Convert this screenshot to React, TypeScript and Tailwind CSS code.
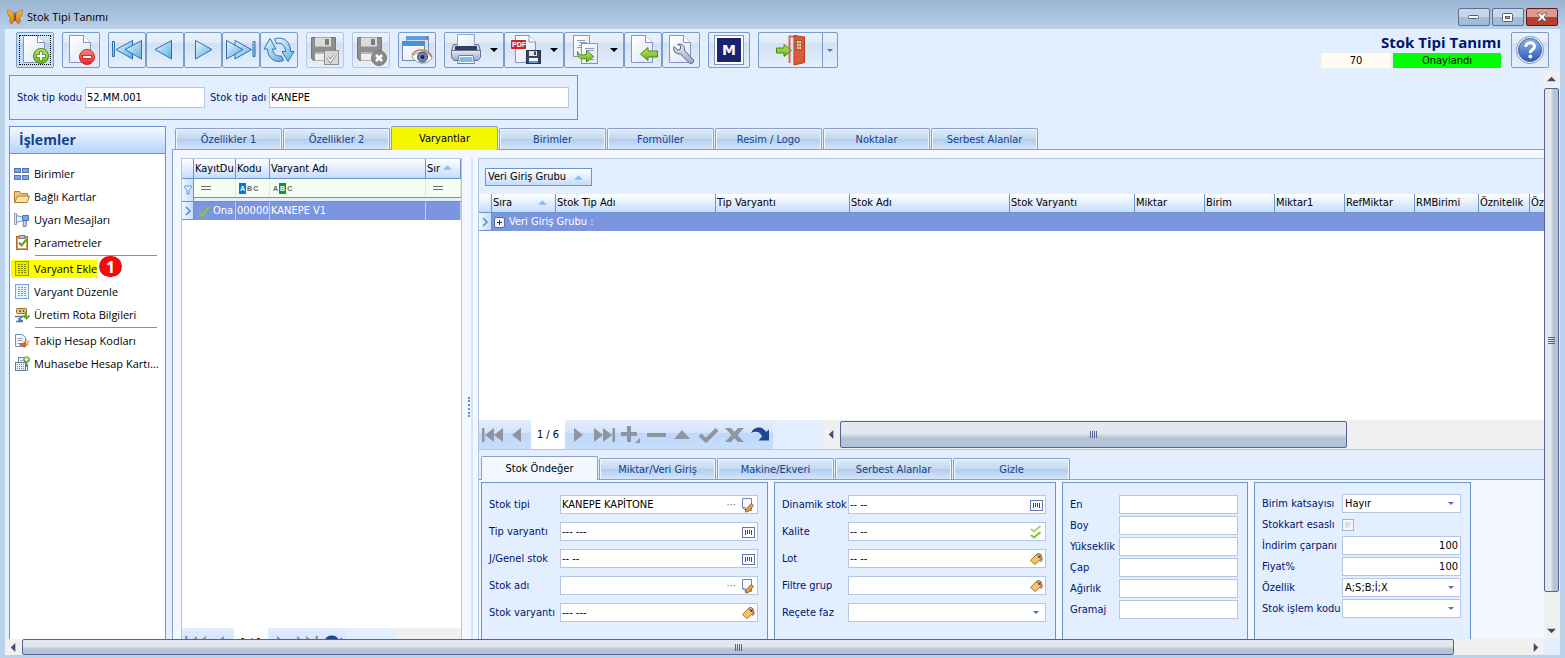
import { Fragment, useState } from 'react';
import type { ReactNode } from 'react';
import clsx from 'clsx';

const formTabs = ['Özellikler 1', 'Özellikler 2', 'Varyantlar', 'Birimler', 'Formüller', 'Resim / Logo', 'Noktalar', 'Serbest Alanlar'];
const detailTabs = ['Stok Öndeğer', 'Miktar/Veri Giriş', 'Makine/Ekveri', 'Serbest Alanlar', 'Gizle'];

const gridColumns = [
  { name: 'Sıra', width: 64, sorted: true },
  { name: 'Stok Tip Adı', width: 160 },
  { name: 'Tip Varyantı', width: 134 },
  { name: 'Stok Adı', width: 160 },
  { name: 'Stok Varyantı', width: 125 },
  { name: 'Miktar', width: 70 },
  { name: 'Birim', width: 70 },
  { name: 'Miktar1', width: 70 },
  { name: 'RefMiktar', width: 70 },
  { name: 'RMBirimi', width: 64 },
  { name: 'Öznitelik', width: 51 },
  { name: 'Öz', width: 60 },
];

/* ---------- shared gradients ---------- */

function Gradients() {
  return (
    <svg className="absolute h-0 w-0" aria-hidden="true">
      <defs>
        <linearGradient id="paper" x1="0" y1="0" x2="1" y2="1">
          <stop offset="0" stopColor="#ffffff" />
          <stop offset="1" stopColor="#dfe6f4" />
        </linearGradient>
        <linearGradient id="sky" x1="0" y1="0" x2="1" y2="1">
          <stop offset="0" stopColor="#e8f7fe" />
          <stop offset="1" stopColor="#5eaee2" />
        </linearGradient>
        <linearGradient id="green" x1="0" y1="0" x2="0" y2="1">
          <stop offset="0" stopColor="#bfe36f" />
          <stop offset="1" stopColor="#6cb01e" />
        </linearGradient>
        <linearGradient id="red" x1="0" y1="0" x2="0" y2="1">
          <stop offset="0" stopColor="#ff8a80" />
          <stop offset="1" stopColor="#e8232a" />
        </linearGradient>
        <linearGradient id="metal" x1="0" y1="0" x2="0" y2="1">
          <stop offset="0" stopColor="#e6ebf5" />
          <stop offset="1" stopColor="#9aa8c4" />
        </linearGradient>
        <linearGradient id="help" x1="0" y1="0" x2="0" y2="1">
          <stop offset="0" stopColor="#8fb4e6" />
          <stop offset="1" stopColor="#2a5bb4" />
        </linearGradient>
        <linearGradient id="amber" x1="0" y1="0" x2="0" y2="1">
          <stop offset="0" stopColor="#ffb52e" />
          <stop offset="1" stopColor="#dd7a08" />
        </linearGradient>
      </defs>
    </svg>
  );
}

/* ---------- toolbar icons ---------- */

function Icon32({ children }: { children: ReactNode }) {
  return <svg viewBox="0 0 32 32" className="h-8 w-8 shrink-0" fill="none" aria-hidden="true">{children}</svg>;
}

function Page() {
  return (
    <g stroke="#8494bb" strokeWidth="1">
      <path d="M4.5 1.5H18.5L25.500 8.500V28.500H4.500Z" fill="url(#paper)" />
      <path d="M18.500 1.500V8.500H25.500" fill="#fff" />
    </g>
  );
}

function PageAddIcon() {
  return (
    <Icon32>
      <Page />
      <circle cx="22" cy="22" r="7.500" fill="url(#green)" stroke="#4d8712" />
      <path d="M20.500 17.500h3v3h3v3h-3v3h-3v-3h-3v-3h3z" fill="#fff" stroke="#4d8712" strokeWidth=".8" />
    </Icon32>
  );
}

function PageRemoveIcon() {
  return (
    <Icon32>
      <Page />
      <circle cx="22" cy="23" r="7.500" fill="url(#red)" stroke="#cf2028" />
      <rect x="17.500" y="21.500" width="9" height="3" fill="#fff" stroke="#b81219" strokeWidth=".8" />
    </Icon32>
  );
}

function FirstIcon() {
  return (
    <Icon32>
      <g fill="url(#sky)" stroke="#2f6fae" strokeLinejoin="round">
        <rect x="1.500" y="7.500" width="2" height="15" />
        <path d="M21.500 6.500V25L5 15.500Z" />
        <path d="M30.500 6.500V25L14 15.500Z" />
      </g>
    </Icon32>
  );
}

function PrevIcon() {
  return <Icon32><path d="M22.500 6.500V25L6 15.500Z" fill="url(#sky)" stroke="#2f6fae" strokeLinejoin="round" /></Icon32>;
}

function NextIcon() {
  return <Icon32><path d="M8.500 6.500V25L25 15.500Z" fill="url(#sky)" stroke="#2f6fae" strokeLinejoin="round" /></Icon32>;
}

function LastIcon() {
  return (
    <Icon32>
      <g fill="url(#sky)" stroke="#2f6fae" strokeLinejoin="round">
        <rect x="28" y="7.500" width="2" height="15" />
        <path d="M10 6.500V25L26.500 15.500Z" />
        <path d="M1.500 6.500V25L18 15.500Z" />
      </g>
    </Icon32>
  );
}

function RefreshIcon() {
  return (
    <Icon32>
      <g fill="url(#sky)" stroke="#2f74b5" strokeLinejoin="round">
        <path d="M7 4.500L13 15H9.500C10 19.500 13 22.500 18.500 22L20.500 26.500C12 30 4.500 24 4.500 15H1Z" />
        <path d="M25 27.500L31 17.500H27.500C28 8 20 1.500 11.500 5L13.500 9.500C18.500 8 22.500 12 22.500 17.500H19Z" />
      </g>
    </Icon32>
  );
}

function Floppy() {
  return (
    <g>
      <path d="M2.500 3.500H26.500V26.500H4.500L2.500 24.500Z" fill="#8f8f8f" stroke="#777" />
      <rect x="6" y="3.500" width="16" height="9" fill="#dcdcdc" />
      <rect x="16" y="5" width="4" height="6" fill="#7c7c7c" />
      <rect x="6" y="18" width="17" height="8.500" fill="#eee" />
      <rect x="6" y="18" width="17" height="2" fill="#b5b5b5" />
    </g>
  );
}

function SaveCheckIcon() {
  return (
    <Icon32>
      <Floppy />
      <rect x="15.500" y="16.500" width="14" height="14" fill="#d8d8d8" stroke="#8e8e8e" />
      <path d="M18.500 23.500l3 3.500 5-7" stroke="#777" strokeWidth="3" />
      <path d="M18.500 23.500l3 3.500 5-7" stroke="#fff" strokeWidth="1.500" />
    </Icon32>
  );
}

function SaveCancelIcon() {
  return (
    <Icon32>
      <Floppy />
      <circle cx="24" cy="24" r="7.500" fill="#8b8b8b" stroke="#777" />
      <path d="M21 21l6 6M27 21l-6 6" stroke="#fff" strokeWidth="2.600" />
    </Icon32>
  );
}

function PreviewIcon() {
  return (
    <Icon32>
      <path d="M5.500 7V2.500H27.500V20" fill="#cfe1f8" stroke="#6a8fc4" />
      <path d="M5 2h23v4H5z" fill="#5b9fe0" />
      <rect x="1.500" y="7.500" width="22" height="19" fill="url(#paper)" stroke="#6f87b6" />
      <path d="M1 7h23v5H1z" fill="#4892dc" />
      <path d="M20 9h2M25 4h2" stroke="#f4452f" strokeWidth="2" />
      <path d="M11 23C15 17 27 16 31 24C26 31 16 31 11 23Z" fill="#fff" stroke="#8792ab" />
      <path d="M11 21C15 14 27 14 31 23" stroke="#c48745" strokeWidth="1.600" />
      <circle cx="21.500" cy="23" r="5" fill="#6f86b4" stroke="#3b4a6c" />
      <circle cx="21.500" cy="23" r="2" fill="#1c2438" />
    </Icon32>
  );
}

function PrinterIcon() {
  return (
    <Icon32>
      <path d="M3.500 10.500H28.500L30.500 17H1.500Z" fill="#c9d2e6" stroke="#65718f" />
      <rect x="7.500" y=".5" width="17" height="12" fill="url(#paper)" stroke="#9aa6c4" />
      <rect x="5" y="12" width="22" height="5" rx="1" fill="#33405c" />
      <path d="M1.500 16.500H30.500V23.500L28 26.500H4L1.500 23.500Z" fill="url(#metal)" stroke="#65718f" />
      <path d="M9 21.500h14l1.500 8h-17z" fill="#fff" stroke="#5f7fb5" />
      <path d="M10 23h12l1 5H9z" fill="#7dbcf0" />
    </Icon32>
  );
}

function PdfIcon() {
  return (
    <Icon32>
      <path d="M5.500 1.500H19L25.500 8V28.500H5.500Z" fill="url(#paper)" stroke="#8494bb" />
      <path d="M19 1.500V8H25.500" fill="#fff" stroke="#8494bb" />
      <rect x="1" y="6" width="15" height="9" rx="1" fill="#cc2229" />
      <text x="2" y="13" fontSize="7" fontWeight="700" fontFamily="Liberation Sans, sans-serif" fill="#fff">PDF</text>
      <rect x="16.500" y="16.500" width="14" height="13" fill="#39455f" stroke="#28324a" />
      <rect x="19" y="17" width="8" height="5" fill="#dfe6f2" />
      <rect x="24" y="17.500" width="2" height="3.500" fill="#39455f" />
      <rect x="19" y="24" width="9" height="5" fill="#eef5ff" />
      <rect x="19" y="27" width="9" height="2" fill="#4f9be0" />
    </Icon32>
  );
}

function CopyIcon() {
  return (
    <Icon32>
      <rect x="3.500" y="1.500" width="16" height="21" fill="url(#paper)" stroke="#8494bb" />
      <path d="M7 6.500h8M9 8.500h8M9 11.500h6M7 13.500h8" stroke="#8d9cbd" />
      <rect x="11.500" y="9.500" width="16" height="20" fill="url(#paper)" stroke="#8494bb" />
      <path d="M15 14.500h9M17 16.500h7M17 25.500h7" stroke="#8d9cbd" />
      <path d="M7.500 17.500C9 22 12 21 16.500 20.500V16.500L23.500 22.500L16.500 28V24.500C10 26 7 23 7.500 17.500Z" fill="url(#green)" stroke="#4f8a15" />
    </Icon32>
  );
}

function ImportIcon() {
  return (
    <Icon32>
      <Page />
      <path d="M13.500 20L21 13.500V17H30.500V23H21V26.500Z" fill="url(#green)" stroke="#4f8a15" />
    </Icon32>
  );
}

function WrenchIcon() {
  return (
    <Icon32>
      <Page />
      <path d="M9 12.500L12.500 16L15.500 15V11.500L12.500 10.500C17 9 20 12 19.500 16.500L28.500 26C29 29 26.500 30 25 29.500L15.500 20C11 20.500 7.500 17 9 12.500Z" fill="url(#metal)" stroke="#56617c" />
    </Icon32>
  );
}

function ExitIcon() {
  return (
    <Icon32>
      <path d="M14.500 29V2.500H22" stroke="#d9694f" strokeWidth="2" />
      <path d="M19 1.500L29.500 3V28.500L19 31Z" fill="#dc5a36" stroke="#b03c20" />
      <path d="M21.500 6.500h5v9h-5z" fill="#f6ddc0" stroke="#9b5635" />
      <path d="M24 6.500v9M21.500 9.500h5M21.500 12.500h5" stroke="#9b5635" strokeWidth=".7" />
      <path d="M1.500 14H9V10.500L16.500 16.500L9 22.500V19H1.500Z" fill="url(#green)" stroke="#4f8a15" />
    </Icon32>
  );
}

function HelpIcon() {
  return (
    <Icon32>
      <circle cx="16" cy="16" r="13.500" fill="#f3f7fe" stroke="#8294bc" />
      <circle cx="16" cy="16" r="11.500" fill="url(#help)" stroke="#3d62a8" />
      <path d="M11.800 13C12 7.500 20.500 7.500 20.500 12.500C20.500 15.500 16.300 15.500 16.300 19" stroke="#fff" strokeWidth="3" />
      <circle cx="16.300" cy="22.500" r="1.900" fill="#fff" />
    </Icon32>
  );
}

function Butterfly() {
  return (
    <svg viewBox="0 0 16 16" className="h-4 w-4" aria-hidden="true">
      <path d="M7.500 7C5.500 3 2.500 .5 .4 1C.1 4 1.500 8 4 9C2 10 2.500 14 4.500 15C6.500 14 7.500 11 7.500 9Z" fill="url(#amber)" stroke="#8a4c0c" strokeWidth=".4" />
      <path d="M8.500 7C10.500 3 13.500 .5 15.600 1C15.900 4 14.500 8 12 9C14 10 13.500 14 11.500 15C9.500 14 8.500 11 8.500 9Z" fill="url(#amber)" stroke="#8a4c0c" strokeWidth=".4" />
      <path d="M8 5v7" stroke="#3a2208" strokeWidth="1" />
      <path d="M8 5L6.500 2.500M8 5L9.500 2.500" stroke="#3a2208" strokeWidth=".5" />
    </svg>
  );
}

/* ---------- 16px icons ---------- */

function Icon16({ children }: { children: ReactNode }) {
  return <svg viewBox="0 0 16 16" className="h-4 w-4 shrink-0" fill="none" aria-hidden="true">{children}</svg>;
}

const TilesIcon = () => (
  <Icon16>
    <g fill="#7ba7de" stroke="#4b78b8">
      <rect x=".5" y="2.500" width="6" height="4" />
      <rect x="8.500" y="2.500" width="6" height="4" />
      <rect x=".5" y="9.500" width="6" height="4" />
      <rect x="8.500" y="9.500" width="6" height="4" />
    </g>
  </Icon16>
);

const FolderIcon = () => (
  <Icon16>
    <path d="M.5 13V2.500H5.500L7 4.500H13.500V7" fill="#f3c77a" stroke="#b47a2c" />
    <path d="M.5 13.500L3.500 7H15.500L13 13.500Z" fill="#fbe2a8" stroke="#b47a2c" />
  </Icon16>
);

const HornIcon = () => (
  <Icon16>
    <path d="M.5 1.500H2.500V12.500H.5Z" fill="#dde7f5" stroke="#8c9fbe" />
    <path d="M2.500 3.500L9.500 5.500V8.500L2.500 10.500Z" fill="#eef4fc" stroke="#7f93b8" />
    <path d="M8.500 3.500H14.500V8.500H8.500Z" fill="#77a7dd" stroke="#4a76b0" />
    <path d="M9.500 9L9 14.500H12L12.500 9" fill="#c5ccd8" stroke="#7c879c" />
  </Icon16>
);

const ClipboardIcon = () => (
  <Icon16>
    <rect x="2.500" y="1.500" width="11" height="13" fill="#e39c58" stroke="#b0692c" />
    <rect x="4" y="4" width="8" height="9" fill="#fff" />
    <rect x="5.500" y=".5" width="5" height="3" fill="#bac3d3" stroke="#76829b" />
    <path d="M5 7.500l2.500 3L12.500 4.500" stroke="#57a321" strokeWidth="2" />
  </Icon16>
);

const ListIcon = ({ active }: { active?: boolean }) => (
  <Icon16>
    <rect x="1.500" y=".5" width="13" height="14" fill={active ? '#e6ee00' : '#eaf4fd'} stroke={active ? '#9a9c00' : '#7ba3d6'} />
    <path d="M4 3.500h2M4 5.500h2M4 7.500h2M4 9.500h2M4 11.500h2M7 3.500h2M7 5.500h2M7 7.500h2M7 9.500h2M7 11.500h2M10 3.500h2M10 5.500h2M10 7.500h2M10 9.500h2M10 11.500h2" stroke={active ? '#7c8a00' : '#6c9fda'} />
  </Icon16>
);

const RouteIcon = () => (
  <Icon16>
    <rect x="2.500" y="1.500" width="10" height="5" rx="1" fill="#efc882" stroke="#94692b" />
    <circle cx="6" cy="4" r="1" fill="#715022" />
    <circle cx="9.500" cy="4" r="1" fill="#715022" />
    <path d="M1 9.500h8l-3 2v2h3M5 11v3M2 14.500h7" stroke="#4c7a96" strokeWidth="1.400" />
    <path d="M12 5v5M9.500 8.500L12.500 11.500L15.500 8.500" stroke="#5ba31d" strokeWidth="1.800" />
  </Icon16>
);

const TrackIcon = () => (
  <Icon16>
    <path d="M1.500 1.500H8.500L11.500 4.500V13.500H1.500Z" fill="#f3f7fd" stroke="#7b8fb5" />
    <path d="M3.500 5.500h5M3.500 7.500h5M3.500 10.500h4" stroke="#8d9fc2" />
    <path d="M6 10.500h4V8.500L13 11.500L10 14.500V12.500H6z" fill="#d86a3c" stroke="#a2431c" strokeWidth=".6" />
    <path d="M12.500 6l.8 2.200 2.200.3-1.700 1.500.6 2.300-1.900-1.200" fill="#ffd23d" stroke="#c98f12" strokeWidth=".6" />
  </Icon16>
);

const CalcIcon = () => (
  <Icon16>
    <rect x="4.500" y="1.500" width="8" height="9" fill="#eef3fb" stroke="#70829f" />
    <rect x="1.500" y="6.500" width="10" height="8" fill="#e6eef9" stroke="#657798" />
    <path d="M3 8.500h7M3 10.500h7M3 12.500h7" stroke="#7d8fb0" strokeDasharray="1 1" />
    <path d="M6 4.500h3" stroke="#8fa6c8" />
    <circle cx="12.500" cy="3.500" r="3" fill="url(#green)" stroke="#4d8712" strokeWidth=".6" />
    <path d="M12.500 2v3M11 3.500h3" stroke="#fff" />
    <path d="M13.500 8v6.500h-1" stroke="#657798" />
  </Icon16>
);

const NotePencilIcon = () => (
  <Icon16>
    <path d="M2.500 1.500H11.500V13.500H5.500L2.500 10.500Z" fill="#f8faff" stroke="#6f86b6" />
    <path d="M2.500 10.500H5.500V13.500" stroke="#6f86b6" />
    <path d="M6 12.500L11 6.500L13.500 8.500L8.500 14.500L5.500 15Z" fill="#e9a03d" stroke="#8a5016" strokeWidth=".8" />
  </Icon16>
);

const BarcodeIcon = () => (
  <Icon16>
    <rect x="2.500" y="3.500" width="12" height="10" fill="#fbfcff" stroke="#6278ad" />
    <path d="M5.500 6v5M7.500 6v4M9.500 6v4M11.500 6v5" stroke="#3d4a69" />
  </Icon16>
);

const TagIcon = () => (
  <Icon16>
    <path d="M2.500 9.500L8 4L12.500 4.500L13 8L7 13.500Z" fill="#f7c26b" stroke="#b07126" />
    <path d="M8.500 4C9.500 1.500 13.500 2.500 13.500 6.500C15 8 13.500 10.500 12 10" stroke="#7a6b5d" strokeWidth="1.200" />
    <circle cx="11" cy="6" r="1" fill="#4a3a2a" />
  </Icon16>
);

const ChecksIcon = () => (
  <Icon16>
    <path d="M3 5l3 2.500L12.500 2" stroke="#a9d46a" strokeWidth="2" />
    <path d="M3 11l3 2.500L12.500 8" stroke="#82bf38" strokeWidth="2" />
  </Icon16>
);

const trailing: Record<string, ReactNode> = {
  note: <NotePencilIcon />,
  barcode: <BarcodeIcon />,
  tag: <TagIcon />,
  checks: <ChecksIcon />,
};

/* ---------- window controls ---------- */

function ToolButton({ label, children, className, width = 'w-[38px]', menu, disabled, focused }: {
  label: string; children: ReactNode; className?: string; width?: string; menu?: boolean; disabled?: boolean; focused?: boolean;
}) {
  return (
    <button
      type="button"
      aria-label={label}
      className={clsx(
        'flex h-9 items-center justify-center rounded-xs border',
        disabled ? 'border-[#b7c6dc]' : 'border-[#7b9bc9]',
        focused
          ? 'bg-[linear-gradient(#dbe9fb_0%,#cbdff7_28%,#b5d0f1_28%,#c9e0fa_100%)] outline-1 -outline-offset-4 outline-black outline-dotted'
          : 'bg-[linear-gradient(#ebf3fe_0%,#e0ebfa_28%,#d0e0f4_28%,#e5effc_100%)]',
        menu ? 'w-[60px] gap-2' : width,
        className,
      )}
    >
      {children}
      {menu && <svg viewBox="0 0 8 4" className="h-1 w-2" aria-hidden="true"><path d="M0 0h8L4 4z" fill="#000" /></svg>}
    </button>
  );
}

function TitleBar() {
  const box = 'flex h-[18px] w-8 items-center justify-center rounded-xs border';
  const blue = 'border-[#5b7394] bg-linear-to-b from-[#c5d7ea] from-50% to-[#a3bcd8] to-50%';
  return (
    <header className="flex h-[29px] shrink-0 items-end bg-linear-to-b from-[#99b4d1] to-[#b8d0e9] pr-[7px] pl-[7px]">
      <div className="flex h-6 flex-1 items-center gap-1">
        <Butterfly />
        <h1 className="font-['Open_Sans',sans-serif] text-[11px] text-black">Stok Tipi Tanımı</h1>
      </div>
      <div className="flex gap-0.5 pb-[3px]">
        <button type="button" aria-label="Simge durumuna küçült" className={clsx(box, blue)}>
          <svg viewBox="0 0 12 6" className="h-1.5 w-3"><rect x=".5" y="1.500" width="10" height="3" rx="1" fill="#fff" stroke="#545d6c" /></svg>
        </button>
        <button type="button" aria-label="Ekranı kapla" className={clsx(box, blue)}>
          <svg viewBox="0 0 12 10" className="h-2.5 w-3"><rect x=".5" y="1.500" width="10" height="8" rx="1" fill="#fff" stroke="#545d6c" /><rect x="3.500" y="4.500" width="4" height="2" fill="#a3bcd8" stroke="#545d6c" /></svg>
        </button>
        <button type="button" aria-label="Kapat" className={clsx(box, 'border-[#5c1c1c] bg-linear-to-b from-[#dc9a90] from-50% to-[#b8402e] to-50%')}>
          <svg viewBox="0 0 12 10" className="h-2.5 w-3"><path d="M1 1h3l2 2.300L8 1h3L8 5l3 4H8L6 6.700 4 9H1l3-4z" fill="#fff" stroke="#5c5560" strokeWidth=".8" /></svg>
        </button>
      </div>
    </header>
  );
}

function Toolbar() {
  return (
    <div className="flex h-[42px] shrink-0 items-start gap-2 px-[11px] pt-[3px]">
      <ToolButton label="Yeni" focused><PageAddIcon /></ToolButton>
      <ToolButton label="Sil"><PageRemoveIcon /></ToolButton>
      <div className="flex">
        <ToolButton label="İlk"><FirstIcon /></ToolButton>
        <ToolButton label="Önceki"><PrevIcon /></ToolButton>
        <ToolButton label="Sonraki"><NextIcon /></ToolButton>
        <ToolButton label="Son"><LastIcon /></ToolButton>
        <ToolButton label="Yenile"><RefreshIcon /></ToolButton>
      </div>
      <ToolButton label="Kaydet" disabled><SaveCheckIcon /></ToolButton>
      <ToolButton label="Vazgeç" disabled><SaveCancelIcon /></ToolButton>
      <ToolButton label="Önizle"><PreviewIcon /></ToolButton>
      <div className="flex">
        <ToolButton label="Yazdır" menu><PrinterIcon /></ToolButton>
        <ToolButton label="PDF kaydet" menu><PdfIcon /></ToolButton>
        <ToolButton label="Kopyala" menu><CopyIcon /></ToolButton>
        <ToolButton label="İçeri al"><ImportIcon /></ToolButton>
        <ToolButton label="Ayarlar"><WrenchIcon /></ToolButton>
      </div>
      <ToolButton label="M" width="w-[42px]">
        <span className="flex h-[30px] w-[30px] items-center justify-center border border-[#7f8fb8] bg-white p-0.5">
          <span className="flex h-full w-full items-center justify-center bg-[#1b2270] font-['DejaVu_Sans',sans-serif] text-sm font-bold text-white">M</span>
        </span>
      </ToolButton>
      <div className="flex">
        <ToolButton label="Çıkış" width="w-16" className="rounded-r-none border-r-0"><ExitIcon /></ToolButton>
        <ToolButton label="Çıkış seçenekleri" width="w-4" className="rounded-l-none">
          <svg viewBox="0 0 6 3" className="h-[3px] w-1.5 shrink-0"><path d="M0 0h6L3 3z" fill="#4a72b0" /></svg>
        </ToolButton>
      </div>
      <div className="mr-0.5 ml-auto w-[180px]">
        <p className="text-right font-['Open_Sans',sans-serif] text-[15px] leading-[21px] font-bold text-[#00156e]">Stok Tipi Tanımı</p>
        <div className="flex h-[15px] gap-0.5 text-center leading-4 text-black">
          <span className="w-[70px] bg-[#fffbf0]">70</span>
          <span className="flex-1 bg-[#00ff00]">Onaylandı</span>
        </div>
      </div>
      <ToolButton label="Yardım"><HelpIcon /></ToolButton>
    </div>
  );
}

function Arrow({ dir }: { dir: 'up' | 'down' | 'left' | 'right' }) {
  const paths = { up: 'M0 7L5 2L10 7z', down: 'M0 3L5 8L10 3z', left: 'M7 0L2 5L7 10z', right: 'M3 0L8 5L3 10z' };
  return <svg viewBox="0 0 10 10" className="h-[9px] w-[9px]" aria-hidden="true"><path d={paths[dir]} fill="#3f4d73" /></svg>;
}

function Grip({ vertical }: { vertical?: boolean }) {
  return (
    <span className={clsx('flex gap-px', vertical && 'flex-col')}>
      {[0, 1, 2, 3].map((n) => (
        <span key={n} className={clsx('bg-[#56658f]', vertical ? 'h-px w-[7px]' : 'h-[7px] w-px')} />
      ))}
    </span>
  );
}

const hThumb = 'flex items-center justify-center rounded-xs border border-[#56658f] bg-linear-to-b from-[#e3e8ef] from-45% to-[#b4c3d5] to-65%';

/* ---------- tabs ---------- */

function TabStrip({ tabs, active, onSelect, wide }: { tabs: string[]; active: string; onSelect: (t: string) => void; wide?: boolean }) {
  return (
    <div role="tablist" className={clsx('flex h-[23px] shrink-0 items-end gap-px', wide ? 'pl-0.5' : 'pl-[3px]')}>
      {tabs.map((tab) => {
        const on = tab === active;
        return (
          <button
            key={tab}
            type="button"
            role="tab"
            aria-selected={on}
            onClick={() => onSelect(tab)}
            className={clsx(
              'rounded-t-xs border border-b-0 border-[#8ba0c8]',
              wide ? 'w-[117px]' : 'w-[107px]',
              on
                ? 'relative -mb-px h-6 text-black'
                : 'h-[21px] bg-[linear-gradient(#e0ebf9_0%,#c5d9f3_48%,#aecbee_48%,#d6e5f9_100%)] pt-0.5 text-[#15428b] shadow-[inset_1px_1px_0_#eef5fd,inset_-1px_0_0_#eef5fd]',
              on && (wide ? 'bg-[#f3f7ff]' : 'bg-[#f4f800]'),
            )}
          >
            {tab}
          </button>
        );
      })}
    </div>
  );
}

/* ---------- sidebar ---------- */

const menuGroups = [
  [
    { name: 'Birimler', icon: <TilesIcon /> },
    { name: 'Bağlı Kartlar', icon: <FolderIcon /> },
    { name: 'Uyarı Mesajları', icon: <HornIcon /> },
    { name: 'Parametreler', icon: <ClipboardIcon /> },
  ],
  [
    { name: 'Varyant Ekle', icon: <ListIcon active />, step: 1 },
    { name: 'Varyant Düzenle', icon: <ListIcon /> },
    { name: 'Üretim Rota Bilgileri', icon: <RouteIcon /> },
  ],
  [
    { name: 'Takip Hesap Kodları', icon: <TrackIcon /> },
    { name: 'Muhasebe Hesap Kartı...', icon: <CalcIcon /> },
  ],
];

function Sidebar() {
  return (
    <nav className="w-[157px] shrink-0 border border-b-0 border-[#6a94cc] bg-white font-['Open_Sans',sans-serif] text-[11px]">
      <h2 className="h-[27px] border-b border-[#6a94cc] bg-linear-to-b from-[#f4f9ff] to-[#b6d4fd] pl-[9px] text-sm leading-[26px] font-bold text-[#15428b]">İşlemler</h2>
      <div className="pt-2">
        {menuGroups.map((group, g) => (
          <Fragment key={g}>
            {g > 0 && <hr className="my-px mr-2 ml-[25px] border-t-[#6a94cc]" />}
            {group.map((item) => (
              <button key={item.name} type="button" className="flex h-[23px] w-full items-center pl-px text-left text-black">
                <span className={clsx('flex h-[18px] items-center gap-1 pl-[3px] whitespace-nowrap', 'step' in item && 'bg-[#ffff00]')}>
                  {item.icon}
                  {item.name}
                </span>
                {'step' in item && (
                  <span className="relative bottom-0.5 left-0.5 flex h-[21px] w-[23px] items-center justify-center rounded-full bg-[#f40a0a] text-base font-bold text-white">
                    {item.step}
                  </span>
                )}
              </button>
            ))}
          </Fragment>
        ))}
      </div>
    </nav>
  );
}

/* ---------- grids ---------- */

function SortMark() {
  return <svg viewBox="0 0 10 5" className="absolute top-1.5 right-2 h-[5px] w-[9px]" aria-hidden="true"><path d="M0 5L5 0L10 5z" fill="#8fbdf5" /></svg>;
}

function RowMark() {
  return <svg viewBox="0 0 8 10" className="mx-auto h-2.5 w-2" aria-hidden="true"><path d="M2 1l4 4-4 4" fill="none" stroke="#4f8fdf" strokeWidth="1.600" /></svg>;
}

const headCell = 'relative overflow-hidden border-r border-b border-[#6a94cc] bg-linear-to-b from-white to-[#c6dcfb] pl-px text-left font-normal whitespace-nowrap text-black';
const markCell = 'border-r border-b border-[#6a94cc] bg-linear-to-r from-[#f1f7ff] to-[#c8defb] p-0';

function Abc({ mark }: { mark: number }) {
  return (
    <span className="flex items-center gap-px pl-0.5 font-['Liberation_Sans',sans-serif] text-[7px] leading-[11px] font-bold text-[#666]">
      {['A', 'B', 'C'].map((letter, i) => (
        <span key={letter} className={clsx(i === mark && 'px-px text-white', i === mark && (i === 0 ? 'bg-[#0078d7]' : 'bg-[#0a9a2a]'))}>{letter}</span>
      ))}
    </span>
  );
}

function EqualsMark() {
  return <svg viewBox="0 0 10 4" className="ml-1.5 h-1 w-2.5" aria-hidden="true"><path d="M0 .5h10M0 3.500h10" stroke="#6e6e6e" /></svg>;
}

function VariantGrid() {
  const filterCell = 'border-r border-[#e0ead8] bg-[#f5fdf3] p-0 pl-px';
  const rowCell = 'overflow-hidden border-r border-[#c3d0f2] bg-[#7b95df] p-0 pl-px whitespace-nowrap text-white';
  return (
    <section className="flex w-[281px] shrink-0 flex-col border border-b-0 border-[#b4c6e2] bg-white">
      <table className="w-full table-fixed border-separate border-spacing-0">
        <colgroup>
          <col className="w-3" /><col className="w-[42px]" /><col className="w-[34px]" /><col /><col className="w-[35px]" />
        </colgroup>
        <thead>
          <tr className="h-5">
            <th className={headCell} />
            <th className={headCell}>KayıtDu</th>
            <th className={headCell}>Kodu</th>
            <th className={headCell}>Varyant Adı</th>
            <th className={headCell}>Sır<SortMark /></th>
          </tr>
        </thead>
        <tbody>
          <tr className="h-[18px]">
            <td rowSpan={2} className={markCell}>
              <svg viewBox="0 0 8 10" className="mx-auto h-2.5 w-2" aria-hidden="true"><path d="M.8 1h6.400v2L5 5v4H3V5L.8 3z" fill="#e6f1ff" stroke="#5b97dd" /></svg>
            </td>
            <td className={filterCell}><EqualsMark /></td>
            <td className={filterCell}><Abc mark={0} /></td>
            <td className={filterCell}><Abc mark={1} /></td>
            <td className={filterCell}><EqualsMark /></td>
          </tr>
          <tr className="h-[5px]">
            <td colSpan={4} className="border-y border-[#6a94cc] bg-[#e3eeff] p-0" />
          </tr>
          <tr className="h-[18px]">
            <td className={markCell}><RowMark /></td>
            <td className={rowCell}>
              <span className="flex items-center gap-[3px] pl-[3px]">
                <svg viewBox="0 0 12 12" className="h-3 w-3 shrink-0" aria-hidden="true"><path d="M1 7.500l3 3L11 2" fill="none" stroke="#8fc531" strokeWidth="2.400" /></svg>
                Ona
              </span>
            </td>
            <td className={rowCell}>00000</td>
            <td className={rowCell}>KANEPE V1</td>
            <td className={rowCell} />
          </tr>
        </tbody>
      </table>
      <div className="flex-1" />
      <div className="flex h-[11px] items-start overflow-hidden">
        <PagerButton name="first" />
        <PagerButton name="prev" />
        <span className="h-[29px] w-[34px] bg-white text-center leading-[29px]">1 / 1</span>
        <PagerButton name="next" />
        <PagerButton name="last" />
        <PagerButton name="redo" />
        <span className="h-[29px] flex-1 bg-[#e3eeff]" />
        <span className="h-[29px] w-[65px] bg-[#f0f0f0]" />
      </div>
    </section>
  );
}

const pagerShapes: Record<string, { label: string; path: string; line?: boolean }> = {
  first: { label: 'İlk kayıt', path: 'M0 3h2.500v14H0zM12 3v14L3 10zM21 3v14L12 10z' },
  prev: { label: 'Önceki kayıt', path: 'M13 3v14L4 10z' },
  next: { label: 'Sonraki kayıt', path: 'M6 3v14L15 10z' },
  last: { label: 'Son kayıt', path: 'M18.500 3H21v14h-2.500zM9 3v14L18 10zM0 3v14L9 10z' },
  add: { label: 'Ekle', path: 'M7 1h4v6h6v4h-6v6H7v-6H1V7h6zM20 13v5h-5z' },
  remove: { label: 'Çıkar', path: 'M1 8h19v4H1z' },
  edit: { label: 'Düzenle', path: 'M2 14L10 5L18 14z' },
  post: { label: 'Onayla', path: 'M2 10L8 15.500L19 4.500', line: true },
  cancel: { label: 'İptal', path: 'M1 3h6l3.500 4L14 3h6l-6.500 7L20 17h-6l-3.500-4L7 17H1l6.500-7z' },
  redo: { label: 'Yenile', path: 'M1 8C4 1 13 1 16 7L19 4.500V15.500H8.500L12 11.500C10 6 5 6 1 8z' },
};

function PagerButton({ name }: { name: string }) {
  const { label, path, line } = pagerShapes[name];
  const fill = name === 'redo' ? '#1e478c' : '#8e959f';
  return (
    <button type="button" aria-label={label} className="flex h-[29px] w-[26px] shrink-0 items-center justify-center bg-[linear-gradient(#e3eeff_0%,#d2e3fc_45%,#bdd7fb_45%,#c9defc_100%)]">
      <svg viewBox="0 0 21 20" className="h-5 w-[21px]" aria-hidden="true">
        {line ? <path d={path} fill="none" stroke={fill} strokeWidth="4" /> : <path d={path} fill={fill} />}
      </svg>
    </button>
  );
}

function DetailGrid() {
  return (
    <section className="flex min-h-0 flex-1 flex-col border-b border-[#b4c6e2]">
      <div className="flex h-[35px] shrink-0 items-center bg-[#e3eeff] pl-1.5">
        <button type="button" className="relative h-[18px] w-[107px] border border-[#6a94cc] bg-linear-to-b from-white to-[#c6dcfb] pl-0.5 text-left whitespace-nowrap text-black">
          Veri Giriş Grubu<SortMark />
        </button>
      </div>
      <div className="min-h-0 flex-1 overflow-hidden bg-white">
        <table className="w-[1111px] table-fixed border-separate border-spacing-0">
          <colgroup>
            <col className="w-[13px]" />
            {gridColumns.map((c) => <col key={c.name} style={{ width: c.width }} />)}
          </colgroup>
          <thead>
            <tr className="h-[19px]">
              <th className={headCell} />
              {gridColumns.map((c) => <th key={c.name} className={headCell}>{c.name}{c.sorted && <SortMark />}</th>)}
            </tr>
          </thead>
          <tbody>
            <tr className="h-[18px]">
              <td className={markCell}><RowMark /></td>
              <td colSpan={gridColumns.length} className="bg-[#7b95df] p-0 text-white">
                <span className="flex items-center gap-1 pl-0.5">
                  <button type="button" aria-label="Grubu aç" className="h-[11px] w-[11px] rounded-xs border border-[#5a6f9a] bg-[#eef3fc]">
                    <svg viewBox="0 0 9 9" className="h-[9px] w-[9px]"><path d="M4.500 2v5M2 4.500h5" stroke="#1a2a4a" /></svg>
                  </button>
                  Veri Giriş Grubu :
                </span>
              </td>
            </tr>
          </tbody>
        </table>
      </div>
      <div className="flex h-[29px] shrink-0 bg-[#e3eeff]">
        <PagerButton name="first" />
        <PagerButton name="prev" />
        <span className="w-[34px] bg-white text-center leading-[29px] text-black">1 / 6</span>
        {['next', 'last', 'add', 'remove', 'edit', 'post', 'cancel', 'redo'].map((name) => <PagerButton key={name} name={name} />)}
        <div className="ml-[50px] flex flex-1 bg-[#f0f0f0] py-px">
          <button type="button" aria-label="Sola kaydır" className="flex w-[17px] items-center justify-center"><Arrow dir="left" /></button>
          <div className={clsx(hThumb, 'flex-[18]')}><Grip /></div>
          <div className="flex-[7]" />
        </div>
      </div>
    </section>
  );
}

/* ---------- detail form ---------- */

const fieldBox = 'flex h-[19px] items-center border border-[#b4c6e2] bg-white';
const inputText = 'h-full min-w-0 flex-1 bg-transparent pl-px text-black outline-none';

function LookupField({ id, label, value = '', icon, browse }: { id: string; label: string; value?: string; icon: string; browse?: boolean }) {
  return (
    <>
      <label htmlFor={id}>{label}</label>
      <div className={clsx(fieldBox, 'w-[198px]')}>
        <input id={id} defaultValue={value} className={inputText} />
        {browse && <button type="button" aria-label={`${label} ara`} className="mr-1 text-[#4a72b0]">···</button>}
        <button type="button" aria-label={`${label} seç`} className="mr-px">{trailing[icon]}</button>
      </div>
    </>
  );
}

function SelectField({ id, label, value = '', className }: { id: string; label: string; value?: string; className: string }) {
  return (
    <>
      <label htmlFor={id}>{label}</label>
      <div className={clsx(fieldBox, 'relative', className)}>
        <select id={id} defaultValue={value} className="h-full w-full appearance-none bg-transparent pl-0.5 text-black outline-none">
          <option>{value}</option>
        </select>
        <svg viewBox="0 0 6 3" className="pointer-events-none absolute top-[7px] right-1.5 h-[3px] w-1.5" aria-hidden="true"><path d="M0 0h6L3 3z" fill="#4a72b0" /></svg>
      </div>
    </>
  );
}

function TextField({ id, label, value = '', right }: { id: string; label: string; value?: string; right?: boolean }) {
  return (
    <>
      <label htmlFor={id}>{label}</label>
      <div className={clsx(fieldBox, 'w-[119px]')}>
        <input id={id} defaultValue={value} className={clsx(inputText, right && 'pr-0.5 text-right')} />
      </div>
    </>
  );
}

const panel = 'border border-b-0 border-[#6a94cc] bg-[#e3eeff] px-[7px] pb-[17px]';

function DetailForm() {
  return (
    <div className="flex gap-1.5 border-t border-[#8ba0c8] bg-[#f3f7ff] pt-0.5 pl-0.5 whitespace-nowrap text-[#00156e]">
      <div className={clsx(panel, 'grid w-[287px] grid-cols-[71px_1fr] content-start items-center gap-y-2 pt-3')}>
        <LookupField id="stok-tipi" label="Stok tipi" value="KANEPE KAPİTONE" icon="note" browse />
        <LookupField id="tip-varyanti" label="Tip varyantı" value="--- ---" icon="barcode" />
        <LookupField id="genel-stok" label="J/Genel stok" value="-- --" icon="barcode" />
        <LookupField id="stok-adi" label="Stok adı" icon="note" browse />
        <LookupField id="stok-varyanti" label="Stok varyantı" value="--- ---" icon="tag" />
      </div>
      <div className={clsx(panel, 'grid w-[282px] grid-cols-[66px_1fr] content-start items-center gap-y-2 pt-3')}>
        <LookupField id="dinamik-stok" label="Dinamik stok" value="-- --" icon="barcode" />
        <LookupField id="kalite" label="Kalite" value="-- --" icon="checks" />
        <LookupField id="lot" label="Lot" value="-- --" icon="tag" />
        <LookupField id="filtre-grup" label="Filtre grup" icon="tag" />
        <SelectField id="recete-faz" label="Reçete faz" className="w-[198px]" />
      </div>
      <div className={clsx(panel, 'grid w-[186px] grid-cols-[49px_1fr] content-start items-center gap-y-0.5 pt-3')}>
        {['En', 'Boy', 'Yükseklik', 'Çap', 'Ağırlık', 'Gramaj'].map((name) => <TextField key={name} id={name} label={name} />)}
      </div>
      <div className={clsx(panel, 'grid w-[217px] auto-rows-[19px] grid-cols-[80px_1fr] content-start items-center gap-y-0.5 pt-[11px]')}>
        <SelectField id="birim-katsayisi" label="Birim katsayısı" value="Hayır" className="w-[119px]" />
        <label htmlFor="stokkart">Stokkart esaslı</label>
        <input id="stokkart" type="checkbox" className="h-3 w-3 appearance-none border border-[#9fb5d6] bg-linear-to-br from-[#bfc5cf] to-white shadow-[inset_0_0_0_2px_#f4f7fc] checked:bg-[#15428b]" />
        <TextField id="indirim" label="İndirim çarpanı" value="100" right />
        <TextField id="fiyat" label="Fiyat%" value="100" right />
        <SelectField id="ozellik" label="Özellik" value="A;S;B;İ;X" className="w-[119px]" />
        <SelectField id="islem-kodu" label="Stok işlem kodu" className="w-[119px]" />
      </div>
    </div>
  );
}

/* ---------- page ---------- */

export default function App() {
  const [formTab, setFormTab] = useState('Varyantlar');
  const [detailTab, setDetailTab] = useState('Stok Öndeğer');

  return (
    <div className="flex h-screen flex-col overflow-hidden bg-[#bad2ea] font-['DejaVu_Sans_Condensed',Roboto,sans-serif] text-[11px] leading-[14px]">
      <Gradients />
      <TitleBar />
      <div className="mx-[5px] mb-[3px] flex min-h-0 flex-1 flex-col bg-[#e3eeff]">
        <Toolbar />
        <div className="flex min-h-0 flex-1">
          <main className="flex min-w-0 flex-1 flex-col overflow-hidden pt-1 pl-1">
            <form className="flex h-[45px] w-[569px] shrink-0 items-center border border-[#6a94cc] pr-2 pl-[7px] text-[#00156e]">
              <label htmlFor="kod" className="w-[68px]">Stok tip kodu</label>
              <input id="kod" defaultValue="52.MM.001" className="h-[21px] w-[120px] border border-[#b4c6e2] bg-white pl-px text-black outline-none" />
              <label htmlFor="ad" className="ml-[5px] w-[59px]">Stok tip adı</label>
              <input id="ad" defaultValue="KANEPE" className="h-[21px] flex-1 border border-[#b4c6e2] bg-white pl-px text-black outline-none" />
            </form>
            <div className="mt-1.5 flex min-h-0 flex-1 gap-1.5">
              <Sidebar />
              <div className="flex min-w-0 flex-1 flex-col">
                <TabStrip tabs={formTabs} active={formTab} onSelect={setFormTab} />
                <div className="flex min-h-0 flex-1 border-t border-l border-[#8ba0c8] bg-[#f3f7ff] pt-2 pl-2">
                  <VariantGrid />
                  <div className="flex w-4 shrink-0 items-center justify-center gap-px">
                    <span className="mt-4 h-5 border-l-2 border-dotted border-[#5b8fd6]" />
                    <span className="h-full w-0.5 bg-[#d3e4fb]" />
                  </div>
                  <div className="flex min-w-0 flex-1 flex-col border-t border-l border-[#b4c6e2]">
                    <DetailGrid />
                    <div className="shrink-0 overflow-hidden bg-[#e3eeff] pt-1.5">
                      <TabStrip tabs={detailTabs} active={detailTab} onSelect={setDetailTab} wide />
                      <DetailForm />
                    </div>
                  </div>
                </div>
              </div>
            </div>
          </main>
          <div className="flex w-4 shrink-0 flex-col bg-[#f0f0f0] pr-px">
            <button type="button" aria-label="Yukarı kaydır" className="flex h-[17px] items-center justify-center"><Arrow dir="up" /></button>
            <div className="flex flex-1 items-center justify-center rounded-xs border border-[#56658f] bg-linear-to-r from-[#e3e8ef] from-45% to-[#b4c3d5] to-65%"><Grip vertical /></div>
            <button type="button" aria-label="Aşağı kaydır" className="mt-[30px] flex h-[17px] items-center justify-center"><Arrow dir="down" /></button>
          </div>
        </div>
        <div className="flex h-4 shrink-0 pr-4">
          <button type="button" aria-label="Sola kaydır" className="flex w-[17px] items-center justify-center bg-[#f0f0f0]"><Arrow dir="left" /></button>
          <div className={clsx(hThumb, 'flex-1')}><Grip /></div>
          <button type="button" aria-label="Sağa kaydır" className="flex w-[90px] items-center justify-end bg-[#f0f0f0] pr-1"><Arrow dir="right" /></button>
        </div>
      </div>
    </div>
  );
}
